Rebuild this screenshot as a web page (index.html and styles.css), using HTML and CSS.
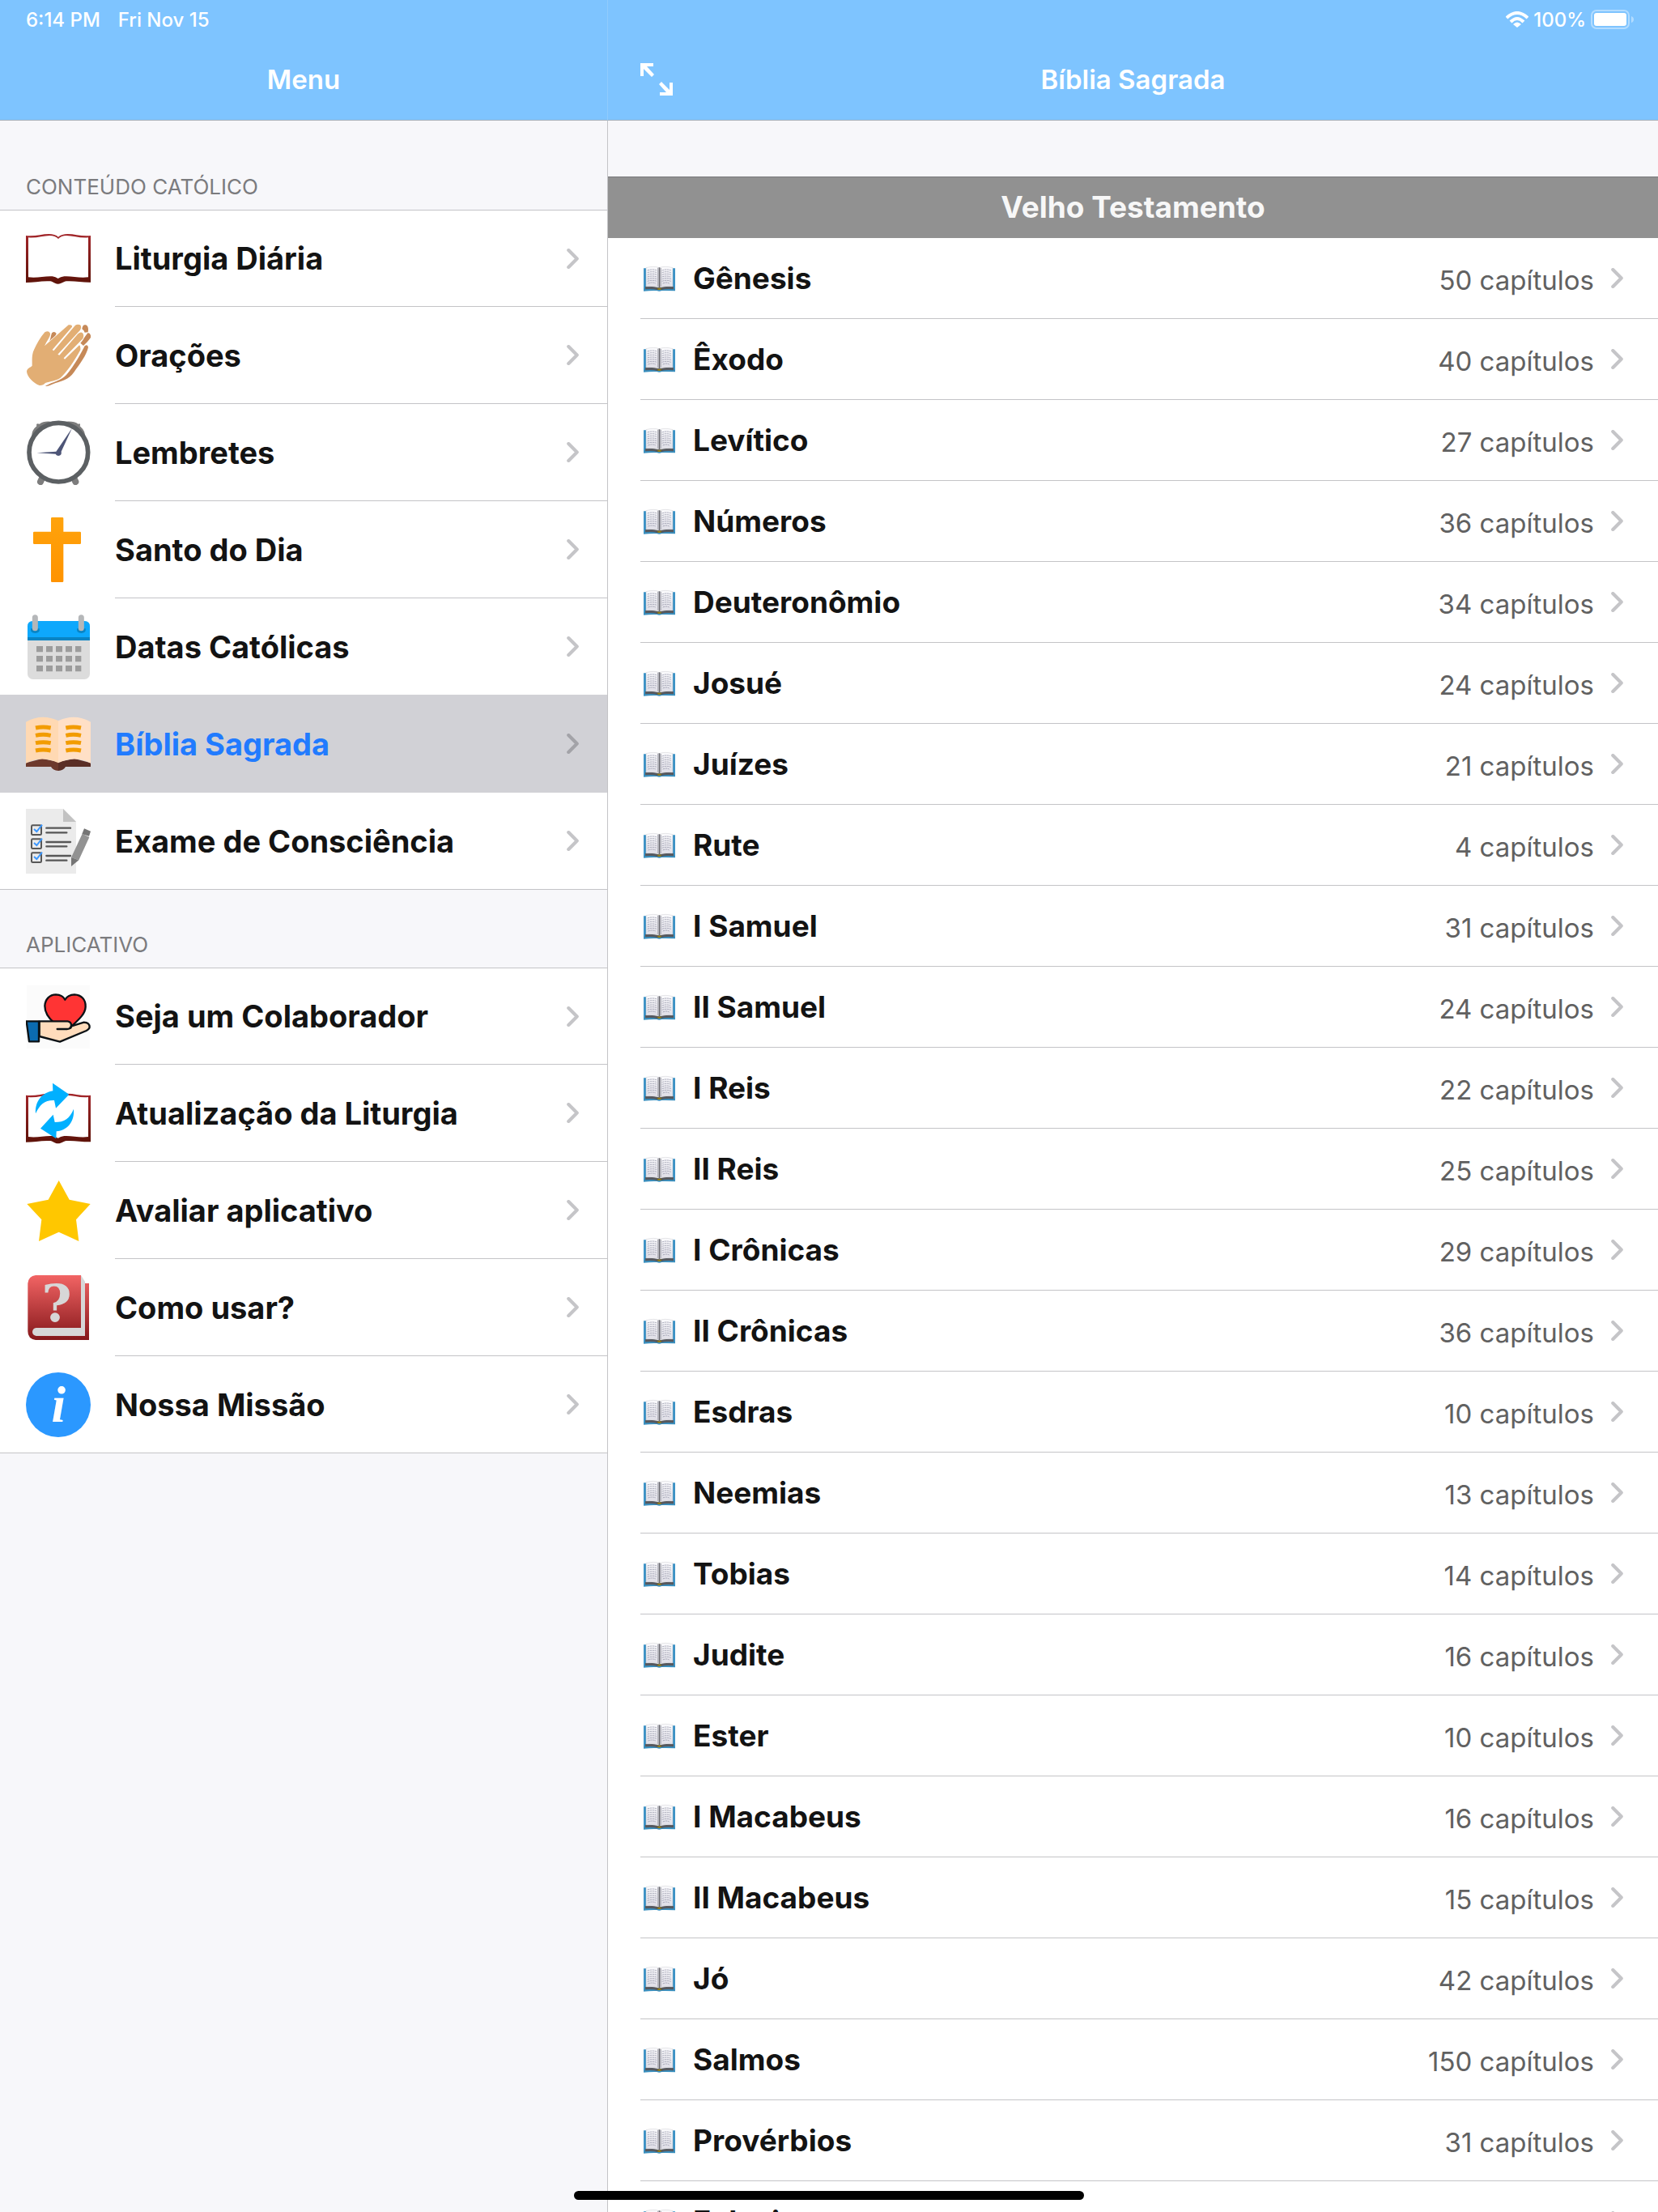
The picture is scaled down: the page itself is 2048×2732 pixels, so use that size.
FILE: index.html
```html
<!DOCTYPE html>
<html lang="pt-BR">
<head>
    <meta charset="UTF-8">
    <meta name="viewport" content="width=device-width, initial-scale=1.0">
    <title>Bíblia Sagrada</title>
    <link rel="stylesheet" href="styles.css">
</head>
<body>
    <!-- Shared icons -->
    <svg class="icon-defs" aria-hidden="true">
        <defs>
            <linearGradient id="leather" x1="0" y1="0" x2="0" y2="1">
                <stop offset="0" stop-color="#a3262a"/>
                <stop offset="1" stop-color="#5c1208"/>
            </linearGradient>
            <linearGradient id="cover" x1="0" y1="0" x2="0" y2="1">
                <stop offset="0" stop-color="#f26464"/>
                <stop offset="1" stop-color="#85181b"/>
            </linearGradient>
            <linearGradient id="gold" x1="0" y1="0" x2="0" y2="1">
                <stop offset="0" stop-color="#ffa30c"/>
                <stop offset="1" stop-color="#ff9300"/>
            </linearGradient>
            <linearGradient id="page" x1="0" y1="0" x2="0" y2="1">
                <stop offset="0" stop-color="#fbfbfd"/>
                <stop offset="1" stop-color="#dedde6"/>
            </linearGradient>
        </defs>
        <symbol id="chevron" viewBox="0 0 14 24">
            <path d="M2 2l10 10L2 22" fill="none" stroke="currentColor" stroke-width="4" stroke-linecap="round" stroke-linejoin="round"/>
        </symbol>
        <symbol id="open-book" viewBox="0 0 240 240">
            <path fill="url(#leather)" fill-rule="evenodd" d="M0 33C30 37 60 27 85 27Q108 27 120 38Q132 27 155 27C180 27 210 37 240 33V206C212 207 180 200 150 202C138 203 134 212 119 212C104 212 102 203 90 202C60 200 28 207 0 207ZM9 40V187C40 192 70 182 98 184Q110 186 119 192Q128 186 142 184C170 182 200 192 231 187V40C200 43 175 33 150 33Q131 33 120 45Q109 33 88 33C65 33 38 43 9 40Z"/>
        </symbol>
        <symbol id="small-book" viewBox="0 0 120 96">
            <path fill="#3d93c6" d="M3 10H12V84H3ZM111 10H120V84H111Z"/>
            <path fill="#3a8fbe" d="M3 84H120V94Q90 92 70 93Q61 97 52 93Q30 92 3 95Z"/>
            <path fill="#56585e" d="M9 78Q40 76 61 82Q82 76 114 78V88Q82 86 70 90H52Q40 86 9 88Z"/>
            <path fill="url(#page)" stroke="#b5b5bb" d="M12 8Q42 0 61 8Q82 0 111 8V78Q82 74 61 80Q42 74 12 78Z"/>
            <path fill="#66666c" d="M59 7H64V81H59Z"/>
            <path fill="#b4b4bc" d="M64 9H69V77L64 79ZM54 8H59V79L54 77Z"/>
            <path fill="none" stroke="#84859a" stroke-width="2" stroke-dasharray="7 2" d="M17 18Q36 12 53 18M17 26Q36 20 52 26M17 34Q36 28 53 34M17 42Q36 36 51 42M17 50Q36 44 53 50M17 58Q36 52 52 58M19 66Q36 60 48 66M71 18Q88 12 106 18M71 26Q88 20 104 26M71 34Q88 28 106 34M71 42Q88 36 103 42M71 50Q88 44 106 50M71 58Q88 52 104 58M74 66Q88 60 98 66"/>
            <path fill="#8e7b16" d="M53 83H70L66 90H57Z"/>
        </symbol>
    </svg>

    <div class="split">
        <aside class="sidebar">
            <header class="top">
                <div class="status">
                    <span>6:14 PM</span>
                    <span>Fri Nov 15</span>
                </div>
                <div class="navbar">
                    <h2 class="nav-title">Menu</h2>
                </div>
            </header>

            <nav class="menu">
                <h3 class="section-title">Conteúdo Católico</h3>
                <ul class="menu-list">
                    <li><a class="menu-item" href="#liturgia">
                        <svg class="menu-icon"><use href="#open-book"/></svg>
                        <span class="menu-label">Liturgia Diária<svg class="chevron"><use href="#chevron"/></svg></span>
                    </a></li>
                    <li><a class="menu-item" href="#oracoes">
                        <svg class="menu-icon" viewBox="0 0 240 240">
                            <path fill="#c68958" d="M72 233C100 218 132 212 150 192C180 158 205 110 218 85Q229 77 231 90C225 118 200 152 178 182C158 210 132 215 110 222C95 228 82 236 72 233ZM87 67C92 60 92 48 96 37Q106 28 113 39C111 48 98 55 87 67ZM202 74C214 62 217 50 230 36Q242 38 240 54C232 66 222 76 213 84ZM208 22Q210 4 222 7Q234 12 230 34L218 35Q216 27 208 22Z"/>
                            <path fill="#e2ae74" d="M69 85C78 64 92 50 90 38Q84 26 70 34C52 54 40 78 30 99C20 120 24 140 23 158C18 165 4 166 3 180C5 200 27 222 50 231Q64 232 72 222C90 215 112 214 128 203C151 184 180 139 202 100Q203 86 198 82L144 134L140 130L211 58Q217 46 210 37Q203 31 193 40L124 119L118 116L201 26Q208 14 201 7Q192 3 183 8L103 103L98 99L171 14Q172 5 158 7Z"/>
                        </svg>
                        <span class="menu-label">Orações<svg class="chevron"><use href="#chevron"/></svg></span>
                    </a></li>
                    <li><a class="menu-item" href="#lembretes">
                        <svg class="menu-icon" viewBox="0 0 240 240">
                            <path fill="#7d7d7d" d="M22 60Q20 38 40 22Q36 10 50 14Q66 2 92 5ZM218 60Q222 42 200 22Q204 10 194 14Q178 2 146 5Z"/>
                            <path stroke="#7d7d7d" stroke-width="24" stroke-linecap="round" d="M60 215L54 228M178 215L184 228"/>
                            <circle cx="121" cy="119" r="109" fill="#fff" stroke="#5c6063" stroke-width="17"/>
                            <path fill="#4d5577" d="M40 121L112 116L171 29L131 116Q134 130 120 132Q112 131 110 125Z"/>
                        </svg>
                        <span class="menu-label">Lembretes<svg class="chevron"><use href="#chevron"/></svg></span>
                    </a></li>
                    <li><a class="menu-item" href="#santo">
                        <svg class="menu-icon" viewBox="0 0 240 240">
                            <path fill="url(#gold)" d="M97 0H135Q139 0 139 4V53H200Q204 53 204 57V95Q204 99 200 99H139V236Q139 240 135 240H97Q93 240 93 236V99H31Q27 99 27 95V57Q27 53 31 53H93V4Q93 0 97 0Z"/>
                        </svg>
                        <span class="menu-label">Santo do Dia<svg class="chevron"><use href="#chevron"/></svg></span>
                    </a></li>
                    <li><a class="menu-item before-selected" href="#datas">
                        <svg class="menu-icon" viewBox="0 0 240 240">
                            <rect x="6" y="24" width="231" height="216" rx="20" fill="#dcdcdc"/>
                            <path fill="#0ea8fc" d="M6 84V44Q6 24 26 24H217Q237 24 237 44V84Z"/>
                            <path fill="#0984c4" d="M6 84H237V96H6Z"/>
                            <path fill="#0984c4" d="M18 52H50Q53 69 34 69Q16 69 18 52ZM189 52H221Q224 69 205 69Q187 69 189 52Z"/>
                            <path stroke="#b5b7b9" stroke-width="21" stroke-linecap="round" d="M34 11V50M205 11V50"/>
                            <path stroke="#9c9c9c" stroke-width="22" stroke-dasharray="24 12" d="M39 128H205M39 164H205M39 200H205"/>
                        </svg>
                        <span class="menu-label">Datas Católicas<svg class="chevron"><use href="#chevron"/></svg></span>
                    </a></li>
                    <li><a class="menu-item selected" href="#biblia" aria-current="page">
                        <svg class="menu-icon" viewBox="0 0 240 240">
                            <path fill="#6d392c" d="M0 190L60 174L120 186V219Q100 217 93 204H0Z"/>
                            <path fill="#5a2e26" d="M240 190L180 174L120 186V219Q140 217 147 204H240Z"/>
                            <path fill="#ffd9b3" d="M0 38Q60 5 120 34V190Q60 161 0 191Z"/>
                            <path fill="#ffe0c6" d="M240 38Q180 5 120 34V190Q180 161 240 191Z"/>
                            <path fill="none" stroke="#f29c00" stroke-width="15" d="M36 60Q64 54 92 60M36 88Q64 82 92 88M36 116Q64 110 92 116M36 144Q64 138 92 144M148 60Q176 54 204 60M148 88Q176 82 204 88M148 116Q176 110 204 116M148 144Q176 138 204 144"/>
                        </svg>
                        <span class="menu-label">Bíblia Sagrada<svg class="chevron"><use href="#chevron"/></svg></span>
                    </a></li>
                    <li><a class="menu-item" href="#exame">
                        <svg class="menu-icon" viewBox="0 0 240 240">
                            <path fill="#ebebeb" d="M0 0H138L186 48V240H0Z"/>
                            <path fill="#c2c2c2" d="M138 0L186 48H138Z"/>
                            <path stroke="#575757" stroke-width="7" stroke-linecap="round" d="M76 71H165M76 88H151M76 123H165M76 139H151M76 174H165M76 191H151"/>
                            <g fill="none" stroke="#575757" stroke-width="6">
                                <rect x="21" y="61" width="36" height="35" rx="4"/>
                                <rect x="21" y="112" width="36" height="35" rx="4"/>
                                <rect x="21" y="163" width="36" height="35" rx="4"/>
                            </g>
                            <path fill="none" stroke="#3b97ff" stroke-width="6" d="M30 75L40 84L60 59M30 126L40 135L60 110M30 177L40 186L60 161"/>
                            <path fill="#929292" d="M209 92L235 105L196 190L168 180Z"/>
                            <path fill="#757575" d="M216 73L240 83L234 101L208 93ZM168 180L196 190L168 213Z"/>
                        </svg>
                        <span class="menu-label">Exame de Consciência<svg class="chevron"><use href="#chevron"/></svg></span>
                    </a></li>
                </ul>

                <h3 class="section-title">Aplicativo</h3>
                <ul class="menu-list">
                    <li><a class="menu-item" href="#colaborador">
                        <svg class="menu-icon" viewBox="0 0 240 240">
                            <rect x="3" y="3" width="234" height="234" fill="#fbfbfb"/>
                            <g stroke="#0b1115" stroke-width="7" stroke-linejoin="round" stroke-linecap="round">
                                <path fill="#ff3434" d="M105 142C88 128 70 106 70 79C71 55 88 37 111 37Q136 38 145 56Q155 38 180 37C206 38 222 57 221 82C220 108 198 128 170 154Z"/>
                                <path fill="#ffdcbc" d="M50 136H155Q168 138 168 151Q166 165 152 165H116H152Q166 165 169 154L215 140Q236 141 236 158Q235 165 224 171L126 212L50 192Z"/>
                                <path fill="#0b6bb0" d="M2 136H48V211H12Z"/>
                            </g>
                        </svg>
                        <span class="menu-label">Seja um Colaborador<svg class="chevron"><use href="#chevron"/></svg></span>
                    </a></li>
                    <li><a class="menu-item" href="#atualizacao">
                        <svg class="menu-icon" viewBox="0 0 240 240">
                            <g transform="translate(0 20)"><use href="#open-book" width="240" height="240"/></g>
                            <path fill="#00b0ff" d="M99 8L160 50L111 101L105 72C72 70 52 86 36 121C33 78 58 44 100 37ZM101 125L54 176L112 214L113 187C154 183 181 151 177 104C163 138 143 153 107 153Z"/>
                        </svg>
                        <span class="menu-label">Atualização da Liturgia<svg class="chevron"><use href="#chevron"/></svg></span>
                    </a></li>
                    <li><a class="menu-item" href="#avaliar">
                        <svg class="menu-icon" viewBox="0 0 240 240">
                            <path fill="#ffc700" d="M122 9L161 80L239 96L186 154L196 234L122 200L48 234L58 154L4 96L83 80Z"/>
                        </svg>
                        <span class="menu-label">Avaliar aplicativo<svg class="chevron"><use href="#chevron"/></svg></span>
                    </a></li>
                    <li><a class="menu-item" href="#como-usar">
                        <svg class="menu-icon" viewBox="0 0 240 240">
                            <path fill="url(#cover)" d="M36 0H204V30H234V240H36Q7 236 7 208V30Q10 3 36 0Z"/>
                            <path fill="#d7d7d7" d="M204 0L219 24V225H38Q24 222 24 210Q25 197 38 195H204Z"/>
                            <text class="help-mark" x="114" y="170" text-anchor="middle">?</text>
                        </svg>
                        <span class="menu-label">Como usar?<svg class="chevron"><use href="#chevron"/></svg></span>
                    </a></li>
                    <li><a class="menu-item" href="#missao">
                        <svg class="menu-icon" viewBox="0 0 240 240">
                            <circle cx="120" cy="120" r="120" fill="#2b98ff"/>
                            <text class="info-mark" x="121" y="182" text-anchor="middle">i</text>
                        </svg>
                        <span class="menu-label">Nossa Missão<svg class="chevron"><use href="#chevron"/></svg></span>
                    </a></li>
                </ul>
            </nav>
        </aside>

        <main class="detail">
            <header class="top">
                <div class="status status-right">
                    <svg class="wifi" viewBox="0 0 28 20">
                        <path fill="none" stroke="#fff" stroke-width="4" d="M1 8Q14 -4 27 8M6 13Q14 5 22 13"/>
                        <path fill="#fff" d="M9 16Q14 11 19 16L14 20Z"/>
                    </svg>
                    <span>100%</span>
                    <svg class="battery" viewBox="0 0 53 24">
                        <rect x="1" y="1" width="46" height="22" rx="6" fill="none" stroke="#b3dcff" stroke-width="2"/>
                        <rect x="4" y="4" width="40" height="16" rx="3" fill="#fff"/>
                        <path fill="#b3dcff" d="M50 8Q53 9 53 12Q53 15 50 16Z"/>
                    </svg>
                </div>
                <div class="navbar">
                    <button class="expand" type="button" aria-label="Expandir">
                        <svg viewBox="0 0 40 40">
                            <path fill="#fff" d="M0 0H16V4H8L17 14L14 17L4 7V16H0ZM40 40H24V36H32L23 26L26 23L36 33V24H40Z"/>
                        </svg>
                    </button>
                    <h1 class="nav-title">Bíblia Sagrada</h1>
                </div>
            </header>

            <section class="books">
                <h2 class="testament">Velho Testamento</h2>
                <ul class="book-list">
                    <li><a class="book" href="#genesis"><svg class="book-icon"><use href="#small-book"/></svg><span class="book-name">Gênesis</span><span class="chapters">50 capítulos</span><svg class="chevron"><use href="#chevron"/></svg></a></li>
                    <li><a class="book" href="#exodo"><svg class="book-icon"><use href="#small-book"/></svg><span class="book-name">Êxodo</span><span class="chapters">40 capítulos</span><svg class="chevron"><use href="#chevron"/></svg></a></li>
                    <li><a class="book" href="#levitico"><svg class="book-icon"><use href="#small-book"/></svg><span class="book-name">Levítico</span><span class="chapters">27 capítulos</span><svg class="chevron"><use href="#chevron"/></svg></a></li>
                    <li><a class="book" href="#numeros"><svg class="book-icon"><use href="#small-book"/></svg><span class="book-name">Números</span><span class="chapters">36 capítulos</span><svg class="chevron"><use href="#chevron"/></svg></a></li>
                    <li><a class="book" href="#deuteronomio"><svg class="book-icon"><use href="#small-book"/></svg><span class="book-name">Deuteronômio</span><span class="chapters">34 capítulos</span><svg class="chevron"><use href="#chevron"/></svg></a></li>
                    <li><a class="book" href="#josue"><svg class="book-icon"><use href="#small-book"/></svg><span class="book-name">Josué</span><span class="chapters">24 capítulos</span><svg class="chevron"><use href="#chevron"/></svg></a></li>
                    <li><a class="book" href="#juizes"><svg class="book-icon"><use href="#small-book"/></svg><span class="book-name">Juízes</span><span class="chapters">21 capítulos</span><svg class="chevron"><use href="#chevron"/></svg></a></li>
                    <li><a class="book" href="#rute"><svg class="book-icon"><use href="#small-book"/></svg><span class="book-name">Rute</span><span class="chapters">4 capítulos</span><svg class="chevron"><use href="#chevron"/></svg></a></li>
                    <li><a class="book" href="#samuel-1"><svg class="book-icon"><use href="#small-book"/></svg><span class="book-name">I Samuel</span><span class="chapters">31 capítulos</span><svg class="chevron"><use href="#chevron"/></svg></a></li>
                    <li><a class="book" href="#samuel-2"><svg class="book-icon"><use href="#small-book"/></svg><span class="book-name">II Samuel</span><span class="chapters">24 capítulos</span><svg class="chevron"><use href="#chevron"/></svg></a></li>
                    <li><a class="book" href="#reis-1"><svg class="book-icon"><use href="#small-book"/></svg><span class="book-name">I Reis</span><span class="chapters">22 capítulos</span><svg class="chevron"><use href="#chevron"/></svg></a></li>
                    <li><a class="book" href="#reis-2"><svg class="book-icon"><use href="#small-book"/></svg><span class="book-name">II Reis</span><span class="chapters">25 capítulos</span><svg class="chevron"><use href="#chevron"/></svg></a></li>
                    <li><a class="book" href="#cronicas-1"><svg class="book-icon"><use href="#small-book"/></svg><span class="book-name">I Crônicas</span><span class="chapters">29 capítulos</span><svg class="chevron"><use href="#chevron"/></svg></a></li>
                    <li><a class="book" href="#cronicas-2"><svg class="book-icon"><use href="#small-book"/></svg><span class="book-name">II Crônicas</span><span class="chapters">36 capítulos</span><svg class="chevron"><use href="#chevron"/></svg></a></li>
                    <li><a class="book" href="#esdras"><svg class="book-icon"><use href="#small-book"/></svg><span class="book-name">Esdras</span><span class="chapters">10 capítulos</span><svg class="chevron"><use href="#chevron"/></svg></a></li>
                    <li><a class="book" href="#neemias"><svg class="book-icon"><use href="#small-book"/></svg><span class="book-name">Neemias</span><span class="chapters">13 capítulos</span><svg class="chevron"><use href="#chevron"/></svg></a></li>
                    <li><a class="book" href="#tobias"><svg class="book-icon"><use href="#small-book"/></svg><span class="book-name">Tobias</span><span class="chapters">14 capítulos</span><svg class="chevron"><use href="#chevron"/></svg></a></li>
                    <li><a class="book" href="#judite"><svg class="book-icon"><use href="#small-book"/></svg><span class="book-name">Judite</span><span class="chapters">16 capítulos</span><svg class="chevron"><use href="#chevron"/></svg></a></li>
                    <li><a class="book" href="#ester"><svg class="book-icon"><use href="#small-book"/></svg><span class="book-name">Ester</span><span class="chapters">10 capítulos</span><svg class="chevron"><use href="#chevron"/></svg></a></li>
                    <li><a class="book" href="#macabeus-1"><svg class="book-icon"><use href="#small-book"/></svg><span class="book-name">I Macabeus</span><span class="chapters">16 capítulos</span><svg class="chevron"><use href="#chevron"/></svg></a></li>
                    <li><a class="book" href="#macabeus-2"><svg class="book-icon"><use href="#small-book"/></svg><span class="book-name">II Macabeus</span><span class="chapters">15 capítulos</span><svg class="chevron"><use href="#chevron"/></svg></a></li>
                    <li><a class="book" href="#jo"><svg class="book-icon"><use href="#small-book"/></svg><span class="book-name">Jó</span><span class="chapters">42 capítulos</span><svg class="chevron"><use href="#chevron"/></svg></a></li>
                    <li><a class="book" href="#salmos"><svg class="book-icon"><use href="#small-book"/></svg><span class="book-name">Salmos</span><span class="chapters">150 capítulos</span><svg class="chevron"><use href="#chevron"/></svg></a></li>
                    <li><a class="book" href="#proverbios"><svg class="book-icon"><use href="#small-book"/></svg><span class="book-name">Provérbios</span><span class="chapters">31 capítulos</span><svg class="chevron"><use href="#chevron"/></svg></a></li>
                    <li><a class="book" href="#eclesiastes"><svg class="book-icon"><use href="#small-book"/></svg><span class="book-name">Eclesiastes</span><span class="chapters">12 capítulos</span><svg class="chevron"><use href="#chevron"/></svg></a></li>
                </ul>
            </section>
        </main>
    </div>

    <div class="home-indicator"></div>
</body>
</html>
```
FILE: styles.css
```css
* {
    box-sizing: border-box;
}

body {
    margin: 0;
    font-family: Inter, "Liberation Sans", sans-serif;
    color: #131313;
    background-color: #f7f7fa;
}

h1, h2, h3, ul {
    margin: 0;
    padding: 0;
}

ul {
    list-style: none;
}

a {
    color: inherit;
    text-decoration: none;
}

svg {
    display: block;
    flex-shrink: 0;
}

.icon-defs {
    position: absolute;
    width: 0;
    height: 0;
}

.split {
    display: grid;
    grid-template-columns: minmax(300px, 751px) 1fr;
    height: 100vh;
    overflow: hidden;
}

.sidebar, .detail {
    display: flex;
    flex-direction: column;
    min-width: 0;
    min-height: 0;
}

/* Top bars */
.top {
    flex-shrink: 0;
    background-color: #7ec4ff;
    border-bottom: 1px solid #a9b1b9;
    color: white;
}

.sidebar .top {
    border-right: 1px solid #91cbfc;
}

.status {
    display: flex;
    align-items: center;
    gap: 22px;
    height: 48px;
    padding: 0 30px 0 32px;
    font-size: 24px;
    font-weight: 500;
}

.status-right {
    justify-content: flex-end;
    gap: 6px;
}

.wifi {
    width: 28px;
    height: 20px;
}

.battery {
    width: 53px;
    height: 24px;
}

.navbar {
    display: grid;
    grid-template-columns: 40px 1fr 40px;
    align-items: center;
    height: 100px;
    padding: 0 40px;
}

.nav-title {
    grid-column: 2;
    text-align: center;
    font-size: 33px;
    font-weight: 600;
}

.expand {
    width: 40px;
    height: 40px;
    padding: 0;
    border: none;
    background: none;
    cursor: pointer;
}

/* Sidebar menu */
.menu {
    flex: 1;
    overflow-y: auto;
    scrollbar-width: none;
    border-right: 1px solid #c4c4c7;
}

.section-title {
    padding: 50px 32px 10px;
    font-size: 26px;
    line-height: 36px;
    font-weight: 400;
    text-transform: uppercase;
    color: #7b7b7e;
}

.section-title:first-child {
    padding-top: 64px;
}

.menu-list {
    border-top: 1px solid #c4c4c7;
    border-bottom: 1px solid #c4c4c7;
    background-color: white;
}

.menu-item {
    display: flex;
    align-items: center;
    gap: 30px;
    height: 120px;
    padding-left: 32px;
}

.menu-list li:first-child .menu-item,
.menu-list li:last-child .menu-item {
    height: 119px;
}

.menu-icon {
    width: 80px;
    height: 80px;
}

.menu-label {
    display: flex;
    flex: 1;
    align-items: center;
    justify-content: space-between;
    align-self: stretch;
    padding-right: 35px;
    border-bottom: 1px solid #c4c4c7;
    font-size: 38px;
    font-weight: 700;
}

.menu-list li:last-child .menu-label {
    border-bottom: none;
}

.selected {
    background-color: #d1d1d6;
    color: #217bff;
}

.before-selected {
    box-shadow: inset 0 -1px #d1d1d6;
}

.selected .menu-label,
.before-selected .menu-label {
    border-color: #d1d1d6;
}

.chevron {
    width: 15px;
    height: 25px;
    color: #c5c5c8;
}

.selected .chevron {
    color: #a3a3a8;
}

.help-mark {
    font-family: "DejaVu Serif", serif;
    font-size: 190px;
    font-weight: 700;
    fill: #d7d7d7;
}

.info-mark {
    font-family: "Liberation Serif", serif;
    font-size: 190px;
    font-weight: 700;
    font-style: italic;
    fill: white;
}

/* Book list */
.books {
    flex: 1;
    overflow-y: auto;
    scrollbar-width: none;
    padding-top: 69px;
}

.testament {
    height: 76px;
    border-top: 1px solid #77777a;
    background-color: #919191;
    color: #f7f7f7;
    font-size: 37px;
    line-height: 74px;
    font-weight: 700;
    text-align: center;
}

.book-list {
    background-color: white;
}

.book-list li {
    padding-left: 40px;
}

.book {
    display: flex;
    align-items: center;
    height: 100px;
    padding: 0 43px 0 3px;
    border-bottom: 1px solid #c4c4c7;
}

.book-icon {
    width: 40px;
    height: 32px;
    margin-right: 22px;
}

.book-name {
    flex: 1;
    font-size: 37px;
    font-weight: 700;
}

.chapters {
    margin-right: 21px;
    padding-top: 4px;
    font-size: 33px;
    color: #616161;
}

/* Bar that floats over the bottom of the screen */
.home-indicator {
    position: fixed;
    bottom: 15px;
    left: 50%;
    width: 630px;
    height: 11px;
    margin-left: -315px;
    border-radius: 6px;
    background-color: black;
}
```
